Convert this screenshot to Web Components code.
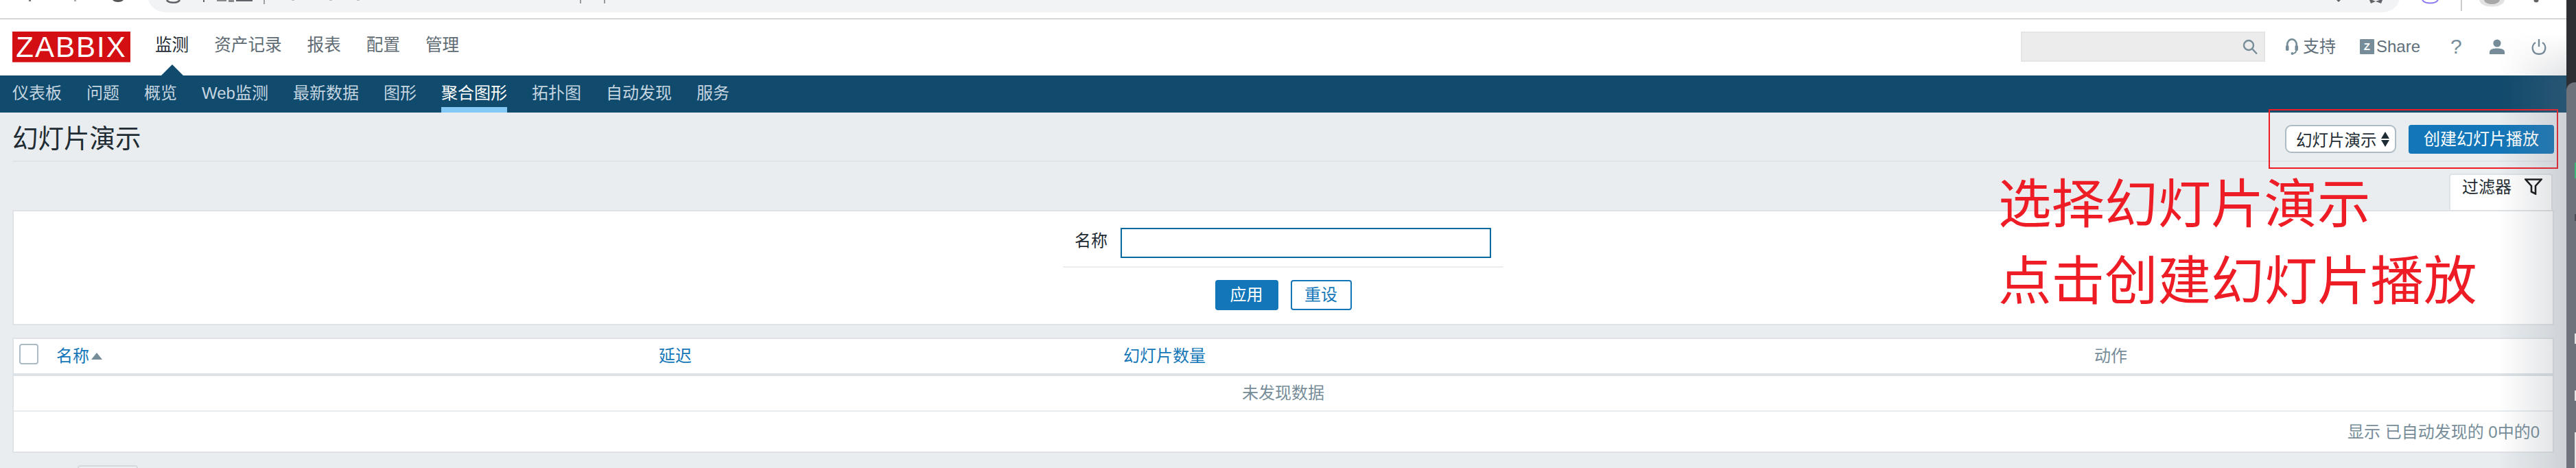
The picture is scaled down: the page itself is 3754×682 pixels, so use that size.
<!DOCTYPE html>
<html lang="zh">
<head>
<meta charset="utf-8">
<title>幻灯片演示</title>
<style>
  html, body { margin: 0; height: 682px; overflow: hidden; background: #e9edf0; }
  body { font-family: "Liberation Sans", "Noto Sans CJK SC", sans-serif; font-size: 24px; color: #1f2c33; }
</style>
</head>
<body>
<zbx-page>
  <zbx-browser-strip></zbx-browser-strip>
  <zbx-top-nav>
    <zbx-nav-link active>监测</zbx-nav-link>
    <zbx-nav-link>资产记录</zbx-nav-link>
    <zbx-nav-link>报表</zbx-nav-link>
    <zbx-nav-link>配置</zbx-nav-link>
    <zbx-nav-link>管理</zbx-nav-link>
  </zbx-top-nav>
  <zbx-sub-nav>
    <zbx-sub-link>仪表板</zbx-sub-link>
    <zbx-sub-link>问题</zbx-sub-link>
    <zbx-sub-link>概览</zbx-sub-link>
    <zbx-sub-link>Web监测</zbx-sub-link>
    <zbx-sub-link>最新数据</zbx-sub-link>
    <zbx-sub-link>图形</zbx-sub-link>
    <zbx-sub-link active>聚合图形</zbx-sub-link>
    <zbx-sub-link>拓扑图</zbx-sub-link>
    <zbx-sub-link>自动发现</zbx-sub-link>
    <zbx-sub-link>服务</zbx-sub-link>
  </zbx-sub-nav>
  <zbx-title-bar>幻灯片演示</zbx-title-bar>
  <zbx-filter></zbx-filter>
  <zbx-table></zbx-table>
  <zbx-pager-stub></zbx-pager-stub>
  <zbx-annotation></zbx-annotation>
</zbx-page>

<script>
class ZbxPage extends HTMLElement {
  constructor() {
    super();
    this.attachShadow({ mode: 'open' });
    this.shadowRoot.innerHTML = `
      <style>
        :host { display: flex; position: relative; width: 3754px; height: 682px; overflow: hidden; }
        .main { width: 3740px; flex: none; }
        /* the soft shade the window casts near the scrollbar */
        .fade {
          position: absolute; left: 3640px; top: 28px; width: 100px; height: 654px;
          background: linear-gradient(to right, rgba(120,125,135,0), rgba(120,125,135,.24));
          -webkit-mask-image: linear-gradient(to bottom, transparent 20px, #000 90px);
          pointer-events: none;
        }
        .bar { flex: 1; position: relative; background: #2c2e33; }
        .thumb { position: absolute; left: 0; right: 0; top: 120px; bottom: 0; background: #6e727b; border-top-left-radius: 12px; }
        .mark { position: absolute; right: 0; width: 2px; background: #e6e6e6; }
      </style>
      <div class="main"><slot></slot></div>
      <div class="fade"></div>
      <div class="bar">
        <div class="thumb"></div>
        <div class="mark" style="top:237px;height:23px;background:#3cb878"></div>
        <div class="mark" style="top:312px;height:10px;background:#4a4d55"></div>
        <div class="mark" style="top:486px;height:15px"></div>
        <div class="mark" style="top:569px;height:15px"></div>
        <div class="mark" style="top:630px;height:52px"></div>
      </div>
    `;
  }
}

class ZbxBrowserStrip extends HTMLElement {
  constructor() {
    super();
    this.attachShadow({ mode: 'open' });
    this.shadowRoot.innerHTML = `
      <style>
        :host { display: block; height: 27px; background: #fff; border-bottom: 1px solid #b5b5b5; overflow: hidden; }
        svg { display: block; }
      </style>
      <!-- only the bottom edge of the browser toolbar is in the picture -->
      <svg width="3740" height="27" viewBox="0 0 3740 27">
        <path d="M216 0 C220 11 229 18 243 18 H3470 C3484 18 3493 11 3497 0 Z" fill="#f1f3f4"/>
        <rect x="42" y="0" width="3" height="2" fill="#777"/>
        <rect x="108" y="0" width="3" height="2" fill="#aaa"/>
        <path d="M164 0 C167 4 177 4 180 0 Z" fill="#555"/>
        <path d="M243 0 C246 5 259 5 262 0" fill="none" stroke="#5f6368" stroke-width="2.5"/>
        <rect x="296" y="0" width="2" height="3" fill="#5f6368"/>
        <rect x="316" y="0" width="14" height="2" fill="#888"/>
        <rect x="333" y="0" width="8" height="3" fill="#888"/>
        <rect x="344" y="0" width="24" height="2" fill="#5f6368"/>
        <rect x="384" y="0" width="2" height="6" fill="#a0a0a0"/>
        <rect x="425" y="0" width="4" height="1" fill="#bbb"/>
        <rect x="480" y="0" width="4" height="1" fill="#bbb"/>
        <rect x="520" y="0" width="4" height="1" fill="#bbb"/>
        <rect x="845" y="0" width="2" height="5" fill="#999"/>
        <rect x="880" y="0" width="2" height="5" fill="#999"/>
        <path d="M3405 0 H3411 L3408 3 Z" fill="#5f6368"/>
        <path d="M3453 0 L3457 0 L3462 2 L3468 0 L3472 0 L3470 5 L3462 2 L3455 5 Z" fill="#5f6368"/>
        <path d="M3530 0 C3534 6 3549 6 3553 0" fill="none" stroke="#8a7cf0" stroke-width="2"/>
        <rect x="3586" y="0" width="2" height="16" fill="#ccc"/>
        <path d="M3613 0 C3615 13 3648 13 3650 0 Z" fill="#e2e2e2"/>
        <path d="M3620 0 C3622 8 3641 8 3643 0 Z" fill="#a8a8a8"/>
        <circle cx="3696" cy="0" r="3.5" fill="#5f6368"/>
      </svg>
    `;
  }
}

class ZbxTopNav extends HTMLElement {
  constructor() {
    super();
    this.attachShadow({ mode: 'open' });
    this.shadowRoot.innerHTML = `
      <style>
        :host { display: flex; align-items: flex-start; box-sizing: border-box; height: 82px; padding: 18px 29px 0 18px; background: #fff; }
        .logo {
          width: 172px; height: 45px; margin-right: 36px; background: #d40f14; color: #fff;
          font-size: 42px; line-height: 46px; letter-spacing: 2px; text-align: center;
          border-bottom: 1px solid #e8666a; box-sizing: border-box;
        }
        nav { display: flex; gap: 37px; }
        .tools { display: flex; align-items: center; height: 44px; margin-left: auto; color: #5f6f7a; }
        .search {
          display: flex; align-items: center; justify-content: flex-end; box-sizing: border-box;
          width: 356px; height: 44px; padding-right: 9px; margin-right: 30px;
          background: #ececec; border: 2px solid #e5e5e5;
        }
        .support { display: flex; align-items: center; gap: 7px; margin-right: 35px; line-height: 42px; }
        .share { display: flex; align-items: center; gap: 3px; margin-right: 44px; }
        .zed {
          width: 21px; height: 22px; background: #768d99; color: #fff; border-radius: 1px;
          font-size: 15px; font-weight: bold; line-height: 22px; text-align: center;
        }
        .help { width: 14px; margin-right: 43px; font-size: 30px; line-height: 42px; text-align: center; color: #768d99; }
        .user { margin-right: 39px; }
        svg { display: block; flex: none; }
      </style>
      <div class="logo">ZABBIX</div>
      <nav><slot></slot></nav>
      <div class="tools">
        <div class="search">
          <svg width="22" height="22" viewBox="0 0 22 22" fill="none" stroke="#768d99" stroke-width="2.4">
            <circle cx="9" cy="9" r="7"/><path d="M14 14 L21 21.5"/>
          </svg>
        </div>
        <div class="support">
          <svg width="18" height="24" viewBox="0 0 18 24" fill="none" stroke="#768d99" stroke-width="2.6">
            <path d="M2.2 14 V9.5 C2.2 -1.5 15.8 -1.5 15.8 9.5 V14"/>
            <rect x="0" y="10" width="4.5" height="8" rx="1.8" fill="#768d99" stroke="none"/>
            <rect x="13.5" y="10" width="4.5" height="8" rx="1.8" fill="#768d99" stroke="none"/>
            <path d="M15.5 17 C15 21 13 22 10 22" stroke-width="2"/>
            <circle cx="9.5" cy="22" r="2" fill="#768d99" stroke="none"/>
          </svg>
          <span>支持</span>
        </div>
        <div class="share"><span class="zed">Z</span><span>Share</span></div>
        <div class="help">?</div>
        <div class="user">
          <svg width="22" height="22" viewBox="0 0 22 22" fill="#768d99">
            <circle cx="11" cy="6" r="5.6"/>
            <path d="M0 22 V19 C0 14.5 6 13.5 11 13.5 C16 13.5 22 14.5 22 19 V22 Z"/>
          </svg>
        </div>
        <svg width="22" height="23" viewBox="0 0 22 23" fill="none" stroke="#768d99" stroke-width="2.4">
          <path d="M6 5 C-1 9 0.5 21.8 11 21.8 C21.5 21.8 23 9 16 5"/>
          <path d="M11 0 V11"/>
        </svg>
      </div>
    `;
  }
}

class ZbxNavLink extends HTMLElement {
  constructor() {
    super();
    this.attachShadow({ mode: 'open' });
    this.shadowRoot.innerHTML = `
      <style>
        :host { display: block; position: relative; font-size: 24.6px; line-height: 34px; height: 34px; padding-top: 3px; color: #5f6b73; }
        :host([active]) { color: #1f2c33; }
        :host([active])::after {
          content: ""; position: absolute; left: 50%; top: 48px; margin-left: -16px;
          border-left: 16px solid transparent; border-right: 16px solid transparent; border-bottom: 16px solid #104a6c;
        }
      </style>
      <slot></slot>
    `;
  }
}

class ZbxSubNav extends HTMLElement {
  constructor() {
    super();
    this.attachShadow({ mode: 'open' });
    this.shadowRoot.innerHTML = `
      <style>
        :host { display: flex; gap: 36px; box-sizing: border-box; height: 54px; padding-left: 18px; background: #104a6c; }
      </style>
      <slot></slot>
    `;
  }
}

class ZbxSubLink extends HTMLElement {
  constructor() {
    super();
    this.attachShadow({ mode: 'open' });
    this.shadowRoot.innerHTML = `
      <style>
        :host { display: block; box-sizing: border-box; height: 54px; padding-top: 9px; line-height: 34px; color: #c5d5e0; border-bottom: 8px solid transparent; }
        :host([active]) { color: #fff; border-bottom-color: #84c9f5; }
      </style>
      <slot></slot>
    `;
  }
}

class ZbxButton extends HTMLElement {
  constructor() {
    super();
    this.attachShadow({ mode: 'open' });
    this.shadowRoot.innerHTML = `
      <style>
        :host { display: block; box-sizing: border-box; height: var(--h, 44px); background: #1376b8; color: #fff; border-radius: 4px; text-align: center; line-height: var(--h, 44px); font-size: 24px; }
        :host([outline]) { background: #fff; color: #1376b8; border: 2px solid #1376b8; line-height: 40px; }
      </style>
      <slot></slot>
    `;
  }
}

class ZbxTitleBar extends HTMLElement {
  constructor() {
    super();
    this.attachShadow({ mode: 'open' });
    this.shadowRoot.innerHTML = `
      <style>
        :host { display: flex; align-items: flex-start; justify-content: space-between; box-sizing: border-box; height: 72px; margin: 0 18px; padding-top: 18px; border-bottom: 2px solid #e0e4e8; }
        h1 { margin: 0; font-size: 37.5px; font-weight: 400; line-height: 40px; color: #1f2c33; }
        .actions { display: flex; gap: 18px; }
        .select {
          display: flex; align-items: center; gap: 6px; box-sizing: border-box; width: 162px; height: 41px; padding-left: 14px;
          background: #fff; border: 2px solid #acbbc4; border-radius: 9px; font-size: 23.5px; white-space: nowrap;
        }
        zbx-button { width: 212px; --h: 42px; }
        svg { display: block; flex: none; }
      </style>
      <h1><slot></slot></h1>
      <div class="actions">
        <div class="select">
          <span>幻灯片演示</span>
          <svg width="12" height="24" viewBox="0 0 12 24" fill="#1f2c33"><path d="M6 1 L12 11 H0 Z M0 13 H12 L6 23 Z"/></svg>
        </div>
        <zbx-button>创建幻灯片播放</zbx-button>
      </div>
    `;
  }
}

class ZbxFilter extends HTMLElement {
  constructor() {
    super();
    this.attachShadow({ mode: 'open' });
    this.shadowRoot.innerHTML = `
      <style>
        :host { display: block; margin: 17px 18px 0; }
        .tabs { display: flex; justify-content: flex-end; padding-right: 2px; }
        .tab {
          display: flex; gap: 19px; box-sizing: border-box; width: 151px; height: 53px; padding: 3px 0 0 17px;
          background: #fff; border: 2px solid #dfe3e7; border-bottom: 0; border-radius: 4px 4px 0 0; line-height: 30px;
        }
        .tab svg { margin-top: 2px; }
        .panel { box-sizing: border-box; height: 168px; padding-top: 24px; background: #fff; border: 2px solid #dfe3e7; }
        .row {
          display: flex; justify-content: flex-end; align-items: flex-start; gap: 19px; box-sizing: border-box;
          width: 642px; height: 58px; margin: 0 auto; padding: 0 18px 14px 0; border-bottom: 2px solid #ebeef0;
        }
        .row span { line-height: 38px; }
        .input { box-sizing: border-box; width: 540px; height: 44px; background: #fff; border: 2px solid #06699e; }
        .buttons { display: flex; justify-content: center; gap: 18px; margin-top: 18px; }
        .apply { width: 92px; }
        .reset { width: 89px; }
      </style>
      <div class="tabs">
        <div class="tab">
          <span>过滤器</span>
          <svg width="26" height="24" viewBox="0 0 26 24" fill="none" stroke="#111" stroke-width="2.6"><path d="M1.5 1.5 H24.5 L16 11 V22.5 L10 19.5 V11 Z"/></svg>
        </div>
      </div>
      <div class="panel">
        <div class="row"><span>名称</span><div class="input"></div></div>
        <div class="buttons">
          <zbx-button class="apply">应用</zbx-button>
          <zbx-button class="reset" outline>重设</zbx-button>
        </div>
      </div>
    `;
  }
}

class ZbxTable extends HTMLElement {
  constructor() {
    super();
    this.attachShadow({ mode: 'open' });
    this.shadowRoot.innerHTML = `
      <style>
        :host { display: block; margin: 18px 18px 0; background: #fff; border: 2px solid #dfe3e7; }
        .head {
          display: grid; grid-template-columns: 62px 878px 677px 1415px 1fr; align-items: center;
          box-sizing: border-box; height: 54px; padding-bottom: 6px; border-bottom: 4px solid #dce2e6; color: #1376b8;
        }
        .check { box-sizing: border-box; width: 28px; height: 30px; margin-left: 8px; border: 2px solid #acbbc4; border-radius: 4px; background: #fff; }
        .name { display: flex; align-items: center; gap: 3px; }
        .name svg { margin-top: 5px; }
        .action { color: #768d99; }
        .empty { box-sizing: border-box; height: 52px; padding-top: 8px; line-height: 34px; text-align: center; color: #768d99; border-bottom: 2px solid #e8ecef; }
        .foot { box-sizing: border-box; height: 58px; padding: 13px 19px 0 0; line-height: 34px; text-align: right; color: #768d99; }
      </style>
      <div class="head">
        <div class="check"></div>
        <div class="name"><span>名称</span>
          <svg width="16" height="10" viewBox="0 0 16 10" fill="#768d99"><path d="M8 0 L16 10 H0 Z"/></svg>
        </div>
        <div>延迟</div>
        <div>幻灯片数量</div>
        <div class="action">动作</div>
      </div>
      <div class="empty">未发现数据</div>
      <div class="foot">显示 已自动发现的 0中的0</div>
    `;
  }
}

class ZbxPagerStub extends HTMLElement {
  constructor() {
    super();
    this.attachShadow({ mode: 'open' });
    this.shadowRoot.innerHTML = `
      <style>
        :host { display: block; box-sizing: border-box; width: 88px; height: 40px; margin: 18px 0 0 113px; background: #edf0f2; border: 2px solid #d3d9dc; border-radius: 4px; }
      </style>
    `;
  }
}

class ZbxAnnotation extends HTMLElement {
  constructor() {
    super();
    this.attachShadow({ mode: 'open' });
    this.shadowRoot.innerHTML = `
      <style>
        :host { display: contents; }
        .box { position: absolute; left: 3306px; top: 159px; width: 422px; height: 87px; box-sizing: border-box; border: 2px solid #ee1c25; }
        .note { position: absolute; left: 2912px; top: 242px; font-size: 77.5px; line-height: 112px; color: #ee1c25; white-space: nowrap; }
      </style>
      <div class="box"></div>
      <div class="note">选择幻灯片演示<br>点击创建幻灯片播放</div>
    `;
  }
}

customElements.define('zbx-page', ZbxPage);
customElements.define('zbx-browser-strip', ZbxBrowserStrip);
customElements.define('zbx-top-nav', ZbxTopNav);
customElements.define('zbx-nav-link', ZbxNavLink);
customElements.define('zbx-sub-nav', ZbxSubNav);
customElements.define('zbx-sub-link', ZbxSubLink);
customElements.define('zbx-button', ZbxButton);
customElements.define('zbx-title-bar', ZbxTitleBar);
customElements.define('zbx-filter', ZbxFilter);
customElements.define('zbx-table', ZbxTable);
customElements.define('zbx-pager-stub', ZbxPagerStub);
customElements.define('zbx-annotation', ZbxAnnotation);
</script>
</body>
</html>
